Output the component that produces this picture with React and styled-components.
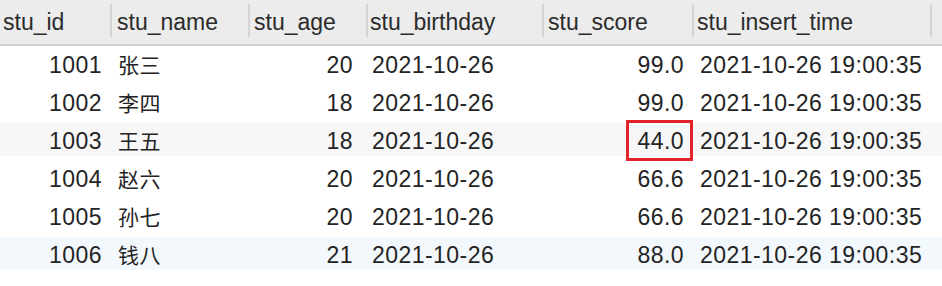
import React from 'react';
import styled, { createGlobalStyle } from 'styled-components';

const GlobalStyle = createGlobalStyle`
  html, body {
    margin: 0;
    padding: 0;
    background: #ffffff;
  }
  body {
    font-family: 'Liberation Sans', 'Noto Sans CJK SC', sans-serif;
    color: #222222;
  }
`;

const COLUMNS = '110px 138px 118px 176px 150px 238px 1fr';

const Table = styled.div`
  width: 942px;
  height: 286px;
  overflow: hidden;
  background: #ffffff;
`;

const HeaderRow = styled.div`
  display: grid;
  grid-template-columns: ${COLUMNS};
  height: 44px;
  background: #ececec;
  border-bottom: 2px solid #d2d2d2;
`;

const HeaderCell = styled.div`
  position: relative;
  display: flex;
  align-items: center;
  padding-left: ${p => p.$pad}px;
  font-size: 23px;
  color: #2b2b2b;
  white-space: nowrap;

  ${p =>
    p.$sep &&
    `
    &::before {
      content: '';
      position: absolute;
      left: 0;
      top: 4px;
      bottom: 7px;
      width: 2px;
      background: #d4d4d4;
    }
  `}
`;

const Body = styled.div`
  display: flex;
  flex-direction: column;
  gap: 5px;
  padding-top: 1px;
`;

const Row = styled.div`
  display: grid;
  grid-template-columns: ${COLUMNS};
  height: 33px;
  background: ${p => p.$bg || 'transparent'};
`;

const Cell = styled.div`
  position: relative;
  display: flex;
  align-items: center;
  justify-content: ${p => (p.$right ? 'flex-end' : 'flex-start')};
  padding: 3px ${p => (p.$right ? p.$pad : 0)}px 0 ${p => (p.$right ? 0 : p.$pad)}px;
  font-size: 23px;
  line-height: 26px;
  letter-spacing: 0.45px;
  color: #242424;
  white-space: nowrap;
`;

const Han = styled.span`
  font-family: 'Noto Sans CJK SC', sans-serif;
  font-size: 21px;
  line-height: 21px;
  letter-spacing: 0.5px;
  margin-top: -2px;
`;

const Marker = styled.div`
  position: absolute;
  left: 84px;
  right: -1px;
  top: -3px;
  bottom: -5px;
  border: 3.5px solid #e3232b;
  pointer-events: none;
`;

const headers = [
  { label: 'stu_id', pad: 3 },
  { label: 'stu_name', pad: 7 },
  { label: 'stu_age', pad: 6 },
  { label: 'stu_birthday', pad: 4 },
  { label: 'stu_score', pad: 6 },
  { label: 'stu_insert_time', pad: 5 },
  { label: '', pad: 0 }
];

const rows = [
  { id: 1001, name: '张三', age: 20, score: '99.0' },
  { id: 1002, name: '李四', age: 18, score: '99.0' },
  { id: 1003, name: '王五', age: 18, score: '44.0', bg: '#f7f7f7', marked: true },
  { id: 1004, name: '赵六', age: 20, score: '66.6' },
  { id: 1005, name: '孙七', age: 20, score: '66.6' },
  { id: 1006, name: '钱八', age: 21, score: '88.0', bg: '#f3f8fd' }
];

const App = () => {
  return (
    <>
      <GlobalStyle />
      <Table>
        <HeaderRow>
          {headers.map((h, i) => (
            <HeaderCell key={i} $pad={h.pad} $sep={i > 0}>
              {h.label}
            </HeaderCell>
          ))}
        </HeaderRow>
        <Body>
          {rows.map(r => (
            <Row key={r.id} $bg={r.bg}>
              <Cell $right $pad={8}>{r.id}</Cell>
              <Cell $pad={8}>
                <Han>{r.name}</Han>
              </Cell>
              <Cell $right $pad={13}>{r.age}</Cell>
              <Cell $pad={6}>2021-10-26</Cell>
              <Cell $right $pad={8}>
                {r.score}
                {r.marked && <Marker />}
              </Cell>
              <Cell $pad={8}>2021-10-26 19:00:35</Cell>
              <Cell />
            </Row>
          ))}
        </Body>
      </Table>
    </>
  );
};

export default App;
